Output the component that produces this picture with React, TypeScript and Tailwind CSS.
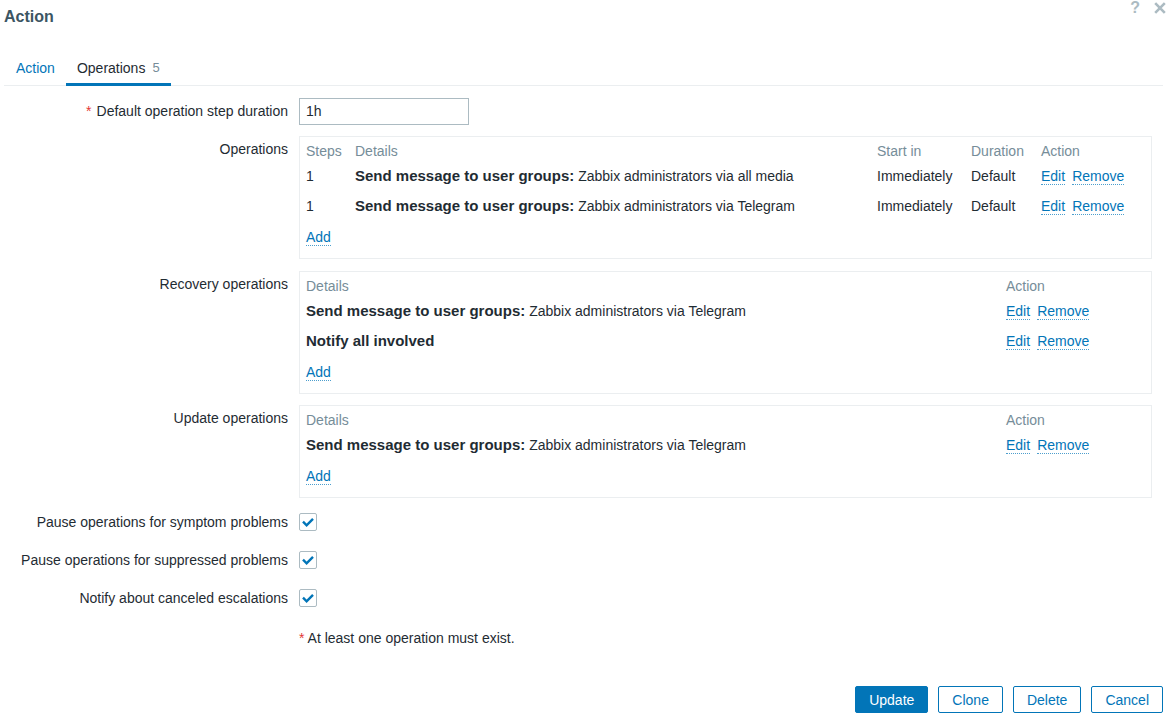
import { useState } from "react";
import type { ReactNode } from "react";

type Operation = {
  steps?: string;
  title: string;
  text?: string;
  start?: string;
  duration?: string;
};

const operations: Operation[] = [
  { steps: "1", title: "Send message to user groups:", text: "Zabbix administrators via all media", start: "Immediately", duration: "Default" },
  { steps: "1", title: "Send message to user groups:", text: "Zabbix administrators via Telegram", start: "Immediately", duration: "Default" },
];

const recoveryOperations: Operation[] = [
  { title: "Send message to user groups:", text: "Zabbix administrators via Telegram" },
  { title: "Notify all involved" },
];

const updateOperations: Operation[] = [
  { title: "Send message to user groups:", text: "Zabbix administrators via Telegram" },
];

function LinkButton({ children }: { children: ReactNode }) {
  return (
    <button type="button" className="cursor-pointer border-b border-dotted border-[#0275b8]/70 text-[#0275b8]">
      {children}
    </button>
  );
}

function Label({ htmlFor, required, children }: { htmlFor?: string; required?: boolean; children: ReactNode }) {
  const content = (
    <>
      {required && <span className="mr-[5px] text-[#e33734]">*</span>}
      {children}
    </>
  );
  const className = "pt-1 text-right leading-[18px]";
  return htmlFor ? (
    <label htmlFor={htmlFor} className={className}>{content}</label>
  ) : (
    <div className={className}>{content}</div>
  );
}

function OperationsTable({ label, rows, detailed }: { label: string; rows: Operation[]; detailed?: boolean }) {
  return (
    <div className="border border-[#ebeef0] pt-1 pb-[5px] pl-1.5">
      <table aria-label={label} className="w-full table-fixed border-collapse text-left">
        <thead>
          <tr className="h-5 text-[#768d99]">
            {detailed && <th className="w-[49px] p-0 font-normal">Steps</th>}
            <th className="p-0 font-normal">Details</th>
            {detailed && <th className="w-[94px] p-0 font-normal">Start in</th>}
            {detailed && <th className="w-[70px] p-0 font-normal">Duration</th>}
            <th className={detailed ? "w-[110px] p-0 font-normal" : "w-[145px] p-0 font-normal"}>Action</th>
          </tr>
        </thead>
        <tbody>
          {rows.map((row, index) => (
            <tr key={index} className="h-[30px]">
              {detailed && <td className="p-0">{row.steps}</td>}
              <td className="p-0">
                <b className="text-[15px] leading-4">{row.title}</b> {row.text}
              </td>
              {detailed && <td className="p-0">{row.start}</td>}
              {detailed && <td className="p-0">{row.duration}</td>}
              <td className="p-0">
                <div className="flex gap-[7px]">
                  <LinkButton>Edit</LinkButton>
                  <LinkButton>Remove</LinkButton>
                </div>
              </td>
            </tr>
          ))}
          <tr className="h-8">
            <td className="p-0" colSpan={detailed ? 5 : 2}>
              <div className="flex">
                <LinkButton>Add</LinkButton>
              </div>
            </td>
          </tr>
        </tbody>
      </table>
    </div>
  );
}

function Checkbox({ id }: { id: string }) {
  const [checked, setChecked] = useState(true);
  return (
    <span className="grid size-[18px]">
      <input
        id={id}
        type="checkbox"
        checked={checked}
        onChange={(event) => setChecked(event.target.checked)}
        className="col-start-1 row-start-1 size-[18px] appearance-none rounded-xs border border-[#acbbc2] bg-white"
      />
      {checked && (
        <svg viewBox="0 0 18 18" className="pointer-events-none col-start-1 row-start-1 size-[18px]" aria-hidden="true">
          <path d="M4 8.7 L7.6 12.3 L14 5.9" fill="none" stroke="#0275b8" strokeWidth="2.4" />
        </svg>
      )}
    </span>
  );
}

function FooterButton({ primary, children }: { primary?: boolean; children: ReactNode }) {
  return (
    <button
      type="button"
      className={
        primary
          ? "h-[27px] cursor-pointer rounded-xs border border-[#0275b8] bg-[#0275b8] px-[13px] text-white"
          : "h-[27px] cursor-pointer rounded-xs border border-[#0275b8] bg-white px-[13px] text-[#0275b8]"
      }
    >
      {children}
    </button>
  );
}

export default function App() {
  const [duration, setDuration] = useState("1h");
  return (
    <main className="bg-white pb-[3px] pl-1 font-['Liberation_Sans',Arial,sans-serif] text-sm leading-4 text-[#1f2c33]">
      <header className="flex h-8 items-start justify-between">
        <h1 className="pt-[9px] text-base leading-4 font-bold text-[#3c5563]">Action</h1>
        <div className="flex items-center gap-3.5 text-[#acbbc2]">
          <button type="button" aria-label="Help" className="h-4 cursor-pointer text-base leading-4 font-bold">
            ?
          </button>
          <button type="button" aria-label="Close" className="grid h-4 cursor-pointer place-items-center">
            <svg viewBox="0 0 12 12" className="size-3" aria-hidden="true">
              <path d="M1.2 1.2 L10.8 10.8 M10.8 1.2 L1.2 10.8" stroke="currentColor" strokeWidth="2.6" />
            </svg>
          </button>
        </div>
      </header>

      <nav className="mt-[19px] mr-[3px] flex h-[35px] border-b border-[#ebeef0] pl-px">
        <a href="#action" className="h-[35px] px-[11px] pt-[9px] text-[#0275b8]">Action</a>
        <a href="#operations" aria-current="page" className="flex h-[35px] gap-[7px] border-b-3 border-[#0275b8] px-[11px] pt-[9px]">
          Operations <span className="text-[13px] text-[#768d99]">5</span>
        </a>
      </nav>

      <form className="pr-[3px]" onSubmit={(event) => event.preventDefault()}>
        <div className="mt-3 mr-[11px] grid grid-cols-[284px_1fr] gap-x-[11px]">
          <Label htmlFor="duration" required>Default operation step duration</Label>
          <input
            id="duration"
            type="text"
            value={duration}
            onChange={(event) => setDuration(event.target.value)}
            className="mb-[11px] h-[27px] w-[170px] border border-[#acbbc2] px-1.5 pb-0.5"
          />
          <Label>Operations</Label>
          <div className="mb-3">
            <OperationsTable label="Operations" rows={operations} detailed />
          </div>
          <Label>Recovery operations</Label>
          <div className="mb-[11px]">
            <OperationsTable label="Recovery operations" rows={recoveryOperations} />
          </div>
          <Label>Update operations</Label>
          <div className="mb-3">
            <OperationsTable label="Update operations" rows={updateOperations} />
          </div>
        </div>

        <div className="mt-[3px] grid grid-cols-[284px_1fr] items-center gap-x-[11px] gap-y-5 leading-[18px]">
          <label htmlFor="symptom" className="text-right">Pause operations for symptom problems</label>
          <Checkbox id="symptom" />
          <label htmlFor="suppressed" className="text-right">Pause operations for suppressed problems</label>
          <Checkbox id="suppressed" />
          <label htmlFor="canceled" className="text-right">Notify about canceled escalations</label>
          <Checkbox id="canceled" />
          <p className="col-start-2 pt-0.5">
            <span className="text-[#e33734]">*</span> At least one operation must exist.
          </p>
        </div>

        <footer className="mt-[39px] flex justify-end gap-2.5">
          <FooterButton primary>Update</FooterButton>
          <FooterButton>Clone</FooterButton>
          <FooterButton>Delete</FooterButton>
          <FooterButton>Cancel</FooterButton>
        </footer>
      </form>
    </main>
  );
}
